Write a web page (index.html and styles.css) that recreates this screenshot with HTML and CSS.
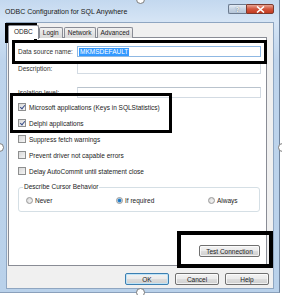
FILE: index.html
```html
<!DOCTYPE html>
<html>
<head>
  <title>ODBC Configuration for SQL Anywhere</title>
  <link rel="stylesheet" href="styles.css">
</head>
<body>
  <div class="screen">
    <div class="window">
      <div class="titlebar">
        <span class="title">ODBC Configuration for SQL Anywhere</span>
        <div class="caption-btns">
          <span class="cap help">?</span>
          <span class="cap close">
            <svg width="9" height="7" viewBox="0 0 9 7"><path d="M1 0.5 L8 6.5 M8 0.5 L1 6.5" stroke="#fff" stroke-width="1.6"/></svg>
          </span>
        </div>
      </div>

      <div class="dialog">
        <div class="tabs">
          <span class="tab active">ODBC</span>
          <span class="tab">Login</span>
          <span class="tab">Network</span>
          <span class="tab">Advanced</span>
        </div>

        <div class="panel">
          <div class="field first">
            <label>Data source name:</label>
            <div class="input focused"><span class="sel">MKMSDEFAULT</span></div>
          </div>
          <div class="field second">
            <label>Description:</label>
            <div class="input"></div>
          </div>
          <div class="field third">
            <label>Isolation level:</label>
            <div class="input"></div>
          </div>

          <div class="checks">
            <div class="check"><span class="box on"></span>Microsoft applications (Keys in SQLStatistics)</div>
            <div class="check"><span class="box on"></span>Delphi applications</div>
            <div class="check"><span class="box"></span>Suppress fetch warnings</div>
            <div class="check"><span class="box"></span>Prevent driver not capable errors</div>
            <div class="check"><span class="box"></span>Delay AutoCommit until statement close</div>
          </div>

          <fieldset class="group">
            <legend>Describe Cursor Behavior</legend>
            <div class="radios">
              <div class="radio"><span class="dot"></span>Never</div>
              <div class="radio"><span class="dot on"></span>If required</div>
              <div class="radio"><span class="dot"></span>Always</div>
            </div>
          </fieldset>

          <div class="test-row">
            <button class="btn test">Test Connection</button>
          </div>
        </div>

        <div class="buttons">
          <button class="btn default">OK</button>
          <button class="btn">Cancel</button>
          <button class="btn">Help</button>
        </div>
      </div>
    </div>

    <!-- annotation boxes -->
    <div class="mark mark-tab"></div>
    <div class="mark mark-name"></div>
    <div class="mark mark-apps"></div>
    <div class="mark mark-test"></div>

    <!-- crop handles -->
    <span class="handle h-top"></span>
    <span class="handle h-left"></span>
    <span class="handle h-right"></span>
    <span class="handle h-bottom"></span>
  </div>
</body>
</html>
```

FILE: styles.css
```css
* {
  box-sizing: border-box;
}

body {
  margin: 0;
  background: #fff;
  font-family: "Liberation Sans", Arial, sans-serif;
  font-size: 6.5px;
  color: #222;
}

.screen {
  position: relative;
  width: 282px;
  height: 295px;
  overflow: hidden;
}

.window {
  width: 280px;
  height: 293px;
  display: flex;
  flex-direction: column;
  padding: 0 5px 3px 6px;
  background: linear-gradient(#c3d8ef, #d6e5f5 22px, #bed4ec 60px, #b9d1ea);
  border-right: 1px solid #6f849f;
  border-bottom: 1px solid #8aa0bb;
}

.titlebar {
  height: 22px;
  display: flex;
  justify-content: space-between;
  align-items: flex-start;
}

.title {
  font-size: 7px;
  color: #1a1a1a;
  padding-top: 8px;
  margin-left: -1px;
}

.caption-btns {
  display: flex;
  margin-top: 4px;
}

.cap {
  height: 10px;
  display: flex;
  align-items: center;
  justify-content: center;
  border: 1px solid #6b7a8e;
}

.cap.help {
  width: 18px;
  border-right: none;
  border-radius: 2px 0 0 2px;
  background: linear-gradient(#e4ecf5, #c6d3e2 50%, #b6c6d9);
  color: #fff;
  font-size: 7px;
  font-weight: bold;
  text-shadow: 0 0 1px #3d4a5a;
}

.cap.close {
  width: 28px;
  border-radius: 0 2px 2px 0;
  border-color: #7b3a2f;
  background: linear-gradient(#e8a493, #d2553d 50%, #c33b20);
}

.dialog {
  flex: 1;
  display: flex;
  flex-direction: column;
  background: #f0f0f0;
  border: 1px solid #8fa6c1;
  padding: 1px 6px 0 1px;
}

/* tabs */
.tabs {
  display: flex;
  align-items: flex-end;
  height: 14px;
  position: relative;
  z-index: 1;
}

.tab {
  height: 11px;
  line-height: 10px;
  padding: 0 3px;
  margin-right: 1px;
  border: 1px solid #898c95;
  border-bottom: none;
  border-radius: 2px 2px 0 0;
  background: linear-gradient(#f2f2f2, #e4e4e4 50%, #d9d9d9);
  margin-bottom: 0;
}

.tab.active {
  height: 14px;
  line-height: 12px;
  padding: 0 5px;
  background: #fff;
  margin-right: 0;
  margin-bottom: -1px;
}

.panel {
  height: 229px;
  margin-top: -1px;
  background: #fff;
  border: 1px solid #898c95;
  padding: 8px 5px 8px 9px;
  display: flex;
  flex-direction: column;
}

.field {
  display: grid;
  grid-template-columns: 59px 1fr;
  align-items: center;
  height: 11px;
}

.field.second {
  margin-top: 6px;
}

.field.third {
  margin-top: 13px;
}

.field label {
  color: #333;
}

.input {
  height: 11px;
  border: 1px solid #d3dbe3;
  border-top-color: #b9c3cd;
  background: #fff;
  padding: 1px 1px;
  display: flex;
  align-items: center;
}

.input.focused {
  border-color: #8fb8e3;
}

.sel {
  background: #3399ff;
  color: #fff;
  line-height: 8px;
  padding: 0 1px;
}

/* checkboxes */
.checks {
  margin-top: 1px;
}

.check {
  height: 16px;
  display: flex;
  align-items: center;
  gap: 3px;
}

.box {
  width: 8px;
  height: 8px;
  border: 1px solid #8e8f8f;
  background: linear-gradient(135deg, #d9d9d9, #f4f4f4);
  position: relative;
}

.box.on::after {
  content: "";
  position: absolute;
  left: 2px;
  top: 0;
  width: 2px;
  height: 4px;
  border-right: 1.3px solid #3a4f8a;
  border-bottom: 1.3px solid #3a4f8a;
  transform: rotate(40deg);
}

/* group box */
.group {
  margin: 4px 1px 0 0;
  padding: 0 7px 2px 7px;
  border: 1px solid #d5dfe5;
  border-radius: 3px;
  height: 29px;
}

.group legend {
  padding: 0 1px;
  margin-left: -3px;
  line-height: 8px;
}

.radios {
  display: grid;
  grid-template-columns: 90px 92px 1fr;
  margin-top: 6px;
}

.radio {
  display: flex;
  align-items: center;
  gap: 2px;
}

.dot {
  width: 7px;
  height: 7px;
  border-radius: 50%;
  border: 1px solid #9a9a9a;
  background: radial-gradient(circle at 60% 60%, #f4f4f4, #cfcfcf);
}

.dot.on {
  background: radial-gradient(circle, #1f6fb6 0, #2b8ad6 1.6px, #c9d6e0 2.2px, #e6e6e6 3.5px);
}

/* buttons */
.test-row {
  margin-top: auto;
  display: flex;
  justify-content: flex-end;
  padding-right: 1px;
}

.btn {
  font-family: inherit;
  font-size: 6.5px;
  color: #222;
  height: 12px;
  width: 44px;
  padding: 0;
  border: 1px solid #707070;
  border-radius: 2px;
  background: linear-gradient(#f2f2f2, #ebebeb 50%, #dddddd 51%, #cfcfcf);
  box-shadow: inset 0 0 0 1px rgba(255, 255, 255, 0.7);
}

.btn.test {
  width: 61px;
}

.btn.default {
  border-color: #3c7fb1;
  box-shadow: inset 0 0 0 1px #bfe4f8;
}

.buttons {
  display: flex;
  justify-content: flex-end;
  gap: 6px;
  margin-top: 7px;
  margin-right: -2px;
}

/* black annotation boxes */
.mark {
  position: absolute;
  border: 3px solid #000;
}

.mark-tab {
  left: 5px;
  top: 23px;
  width: 32px;
  height: 20px;
  border-bottom: none;
}

.mark-name {
  left: 12px;
  top: 40px;
  width: 255px;
  height: 24px;
}

.mark-apps {
  left: 10px;
  top: 93px;
  width: 162px;
  height: 40px;
}

.mark-test {
  left: 177px;
  top: 231px;
  width: 96px;
  height: 37px;
  border-width: 4px;
}

/* crop handles */
.handle {
  position: absolute;
  width: 9px;
  height: 9px;
  border-radius: 50%;
  background: #fff;
  border: 1px solid #7a7a7a;
}

.h-top {
  left: 136px;
  top: -5px;
}

.h-bottom {
  left: 136px;
  top: 288px;
}

.h-left {
  left: -5px;
  top: 143px;
}

.h-right {
  left: 278px;
  top: 143px;
}
```
